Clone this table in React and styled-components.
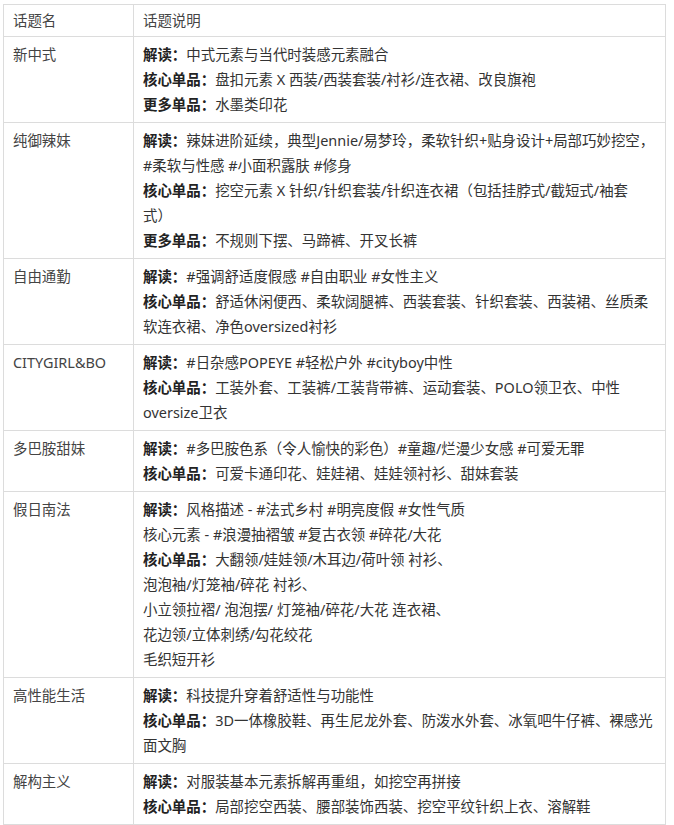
import React from "react";
import styled, { createGlobalStyle } from "styled-components";

const GlobalStyle = createGlobalStyle`
  body {
    margin: 0;
    background: #fff;
    font-family: "Noto Sans", "Noto Sans CJK SC", sans-serif;
    color: #333;
  }
`;

const Page = styled.div`
  padding: 4px 8px 0 3px;
`;

const Table = styled.table`
  width: 663px;
  border-collapse: collapse;
  table-layout: fixed;
  font-size: 14.45px;
  line-height: 25px;
`;

const HeadCell = styled.th`
  border: 1px solid #dcdcdc;
  padding: 3px 9px;
  text-align: left;
  font-weight: normal;
  color: #444;
`;

const NameCell = styled.td`
  border: 1px solid #dcdcdc;
  padding: 5px 9px;
  vertical-align: top;
  color: #444;
  white-space: nowrap;
  overflow: hidden;
`;

const DescCell = styled.td`
  border: 1px solid #dcdcdc;
  padding: 5px 10px 5px 9px;
  vertical-align: top;
  color: #333;
  text-spacing-trim: space-all;
`;

const Line = styled.div`
  word-break: ${(p) => (p.$breakAll ? "break-all" : "normal")};
`;

const Label = styled.b`
  font-weight: bold;
  color: #222;
`;

const rows = [
  {
    name: "新中式",
    lines: [
      ["解读：", "中式元素与当代时装感元素融合"],
      ["核心单品：", "盘扣元素 X 西装/西装套装/衬衫/连衣裙、改良旗袍"],
      ["更多单品：", "水墨类印花"],
    ],
  },
  {
    name: "纯御辣妹",
    lines: [
      ["解读：", "辣妹进阶延续，典型Jennie/易梦玲，柔软针织+贴身设计+局部巧妙挖空，#柔软与性感 #小面积露肤 #修身", true],
      ["核心单品：", "挖空元素 X 针织/针织套装/针织连衣裙（包括挂脖式/截短式/袖套式）", true],
      ["更多单品：", "不规则下摆、马蹄裤、开叉长裤"],
    ],
  },
  {
    name: "自由通勤",
    lines: [
      ["解读：", "#强调舒适度假感 #自由职业 #女性主义"],
      ["核心单品：", "舒适休闲便西、柔软阔腿裤、西装套装、针织套装、西装裙、丝质柔软连衣裙、净色oversized衬衫"],
    ],
  },
  {
    name: "CITYGIRL&BO",
    lines: [
      ["解读：", "#日杂感POPEYE #轻松户外 #cityboy中性"],
      ["核心单品：", "工装外套、工装裤/工装背带裤、运动套装、POLO领卫衣、中性oversize卫衣"],
    ],
  },
  {
    name: "多巴胺甜妹",
    lines: [
      ["解读：", "#多巴胺色系（令人愉快的彩色）#童趣/烂漫少女感 #可爱无罪"],
      ["核心单品：", "可爱卡通印花、娃娃裙、娃娃领衬衫、甜妹套装"],
    ],
  },
  {
    name: "假日南法",
    lines: [
      ["解读：", "风格描述 - #法式乡村 #明亮度假 #女性气质"],
      [null, "核心元素 - #浪漫抽褶皱 #复古衣领 #碎花/大花"],
      ["核心单品：", "大翻领/娃娃领/木耳边/荷叶领 衬衫、"],
      [null, "泡泡袖/灯笼袖/碎花 衬衫、"],
      [null, "小立领拉褶/ 泡泡摆/ 灯笼袖/碎花/大花 连衣裙、"],
      [null, "花边领/立体刺绣/勾花绞花"],
      [null, "毛织短开衫"],
    ],
  },
  {
    name: "高性能生活",
    lines: [
      ["解读：", "科技提升穿着舒适性与功能性"],
      ["核心单品：", "3D一体橡胶鞋、再生尼龙外套、防泼水外套、冰氧吧牛仔裤、裸感光面文胸"],
    ],
  },
  {
    name: "解构主义",
    lines: [
      ["解读：", "对服装基本元素拆解再重组，如挖空再拼接"],
      ["核心单品：", "局部挖空西装、腰部装饰西装、挖空平纹针织上衣、溶解鞋"],
    ],
  },
];

export default function App() {
  return (
    <>
      <GlobalStyle />
      <Page lang="zh-CN">
        <Table>
          <colgroup>
            <col style={{ width: "130px" }} />
            <col />
          </colgroup>
          <thead>
            <tr>
              <HeadCell>话题名</HeadCell>
              <HeadCell>话题说明</HeadCell>
            </tr>
          </thead>
          <tbody>
            {rows.map((row) => (
              <tr key={row.name}>
                <NameCell>{row.name}</NameCell>
                <DescCell>
                  {row.lines.map(([label, text, breakAll], i) => (
                    <Line key={i} $breakAll={breakAll}>
                      {label && <Label>{label}</Label>}
                      {text}
                    </Line>
                  ))}
                </DescCell>
              </tr>
            ))}
          </tbody>
        </Table>
      </Page>
    </>
  );
}
